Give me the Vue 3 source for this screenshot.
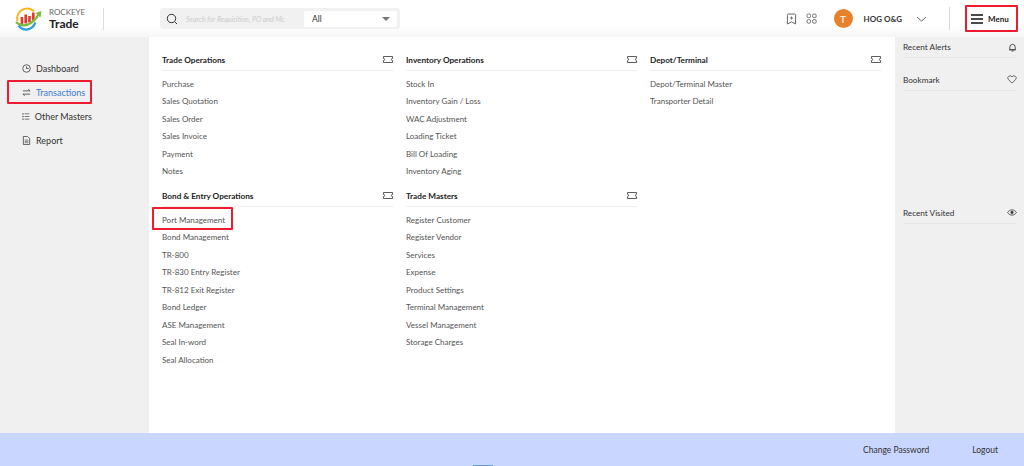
<template>
  <div class="page">
    <header class="topbar">
      <div class="brand">
        <svg class="logo" viewBox="0 0 28 24" width="28" height="24">
          <path d="M3.5 14 A10 10 0 0 1 20 4.2" fill="none" stroke="#f5b81f" stroke-width="2.2" />
          <rect x="6.6" y="10" width="2.6" height="7.5" fill="#e0392e" />
          <rect x="10.4" y="7.5" width="2.6" height="9" fill="#e0392e" />
          <rect x="14.2" y="9" width="2.6" height="6.5" fill="#e0392e" />
          <rect x="18" y="5.5" width="2.6" height="8" fill="#e0392e" />
          <path d="M2 15 C8 21 18 19 24.5 7.5" fill="none" stroke="#7cbb3c" stroke-width="2.4" />
          <path d="M21.5 6 L27.5 4 L26.5 10.5 Z" fill="#7cbb3c" />
          <path d="M4.5 18.5 C9 24.5 18 24 21.5 15.5" fill="none" stroke="#2f9fd8" stroke-width="2.2" />
        </svg>
        <div class="brand-text">
          <span class="brand-top">ROCKEYE</span>
          <span class="brand-name">Trade</span>
        </div>
      </div>
      <div class="search">
        <svg class="search-icon" viewBox="0 0 12 12" width="12" height="12">
          <circle cx="5.5" cy="5.5" r="4.2" fill="none" stroke="#333" stroke-width="1" />
          <path d="M8.5 8.5 L11 11" stroke="#333" stroke-width="1" />
        </svg>
        <span class="search-hint">Search for Requisition, PO and Mc</span>
        <div class="search-select">
          <span>All</span>
          <i class="caret"></i>
        </div>
      </div>
      <div class="top-actions">
        <svg viewBox="0 0 11 12" width="11" height="12">
          <path d="M2.6 1 H8.4 A1.2 1.2 0 0 1 9.6 2.2 V11 L5.5 8.8 L1.4 11 V2.2 A1.2 1.2 0 0 1 2.6 1 Z" fill="none" stroke="#555" stroke-width="0.9" stroke-linejoin="round" />
          <path d="M5.5 3.5 V6.5 M4 5 H7" stroke="#555" stroke-width="0.8" />
        </svg>
        <svg class="apps" viewBox="0 0 11 11" width="11" height="11">
          <g fill="none" stroke="#666" stroke-width="0.9">
            <rect x="1" y="1" width="3.6" height="3.6" rx="1.4" />
            <rect x="6.6" y="1" width="3.6" height="3.6" rx="1.4" />
            <rect x="1" y="6.6" width="3.6" height="3.6" rx="1.4" />
            <rect x="6.6" y="6.6" width="3.6" height="3.6" rx="1.4" />
          </g>
        </svg>
        <span class="avatar">T</span>
        <span class="user">HOG O&amp;G</span>
        <svg class="chevron" viewBox="0 0 11 6" width="11" height="6">
          <path d="M1 1 L5.5 5 L10 1" fill="none" stroke="#555" stroke-width="0.9" />
        </svg>
        <button class="menu-btn marked">
          <svg viewBox="0 0 12 10" width="12" height="10">
            <path d="M0 1 H12 M0 5 H12 M0 9 H12" stroke="#111" stroke-width="1.3" />
          </svg>
          Menu
        </button>
      </div>
    </header>

    <div class="body">
      <aside class="sidebar">
        <a v-for="item in navItems" :key="item.label" :class="['nav-item', { active: item.active, marked: item.active }]">
          <svg viewBox="0 0 10 10" width="9" height="9" v-html="item.icon"></svg>
          {{ item.label }}
        </a>
      </aside>

      <main class="content">
        <div v-for="(column, i) in columns" :key="i" class="column">
          <section v-for="group in column" :key="group.title" class="group">
            <div class="group-head">
              <span>{{ group.title }}</span>
              <svg viewBox="0 0 10 7" width="10" height="7">
                <path d="M0.5 0.5 H9.5 V2.4 A1.1 1.1 0 0 0 9.5 4.6 V6.5 H0.5 V4.6 A1.1 1.1 0 0 0 0.5 2.4 Z" fill="none" stroke="#333" stroke-width="0.8" />
              </svg>
            </div>
            <div class="group-items">
              <a v-for="link in group.links" :key="link" :class="['link', { marked: link === 'Port Management' }]">{{ link }}</a>
            </div>
          </section>
        </div>
      </main>

      <aside class="rightbar">
        <div class="side-block">
          <span>Recent Alerts</span>
          <svg viewBox="0 0 10 10" width="9" height="9">
            <path d="M2 7.5 V4.5 A3 3 0 0 1 8 4.5 V7.5 Z M1.2 7.6 H8.8 M4 9 H6" fill="none" stroke="#333" stroke-width="0.9" />
          </svg>
        </div>
        <div class="side-block bookmark">
          <span>Bookmark</span>
          <svg viewBox="0 0 11 10" width="10" height="9">
            <path d="M5.5 9 L1.2 4.8 A2.5 2.5 0 0 1 5.5 2.2 A2.5 2.5 0 0 1 9.8 4.8 Z" fill="none" stroke="#333" stroke-width="0.8" />
          </svg>
        </div>
        <div class="side-block visited">
          <span>Recent Visited</span>
          <svg viewBox="0 0 11 8" width="10" height="7">
            <path d="M0.5 4 C3 0 8 0 10.5 4 C8 8 3 8 0.5 4 Z" fill="none" stroke="#333" stroke-width="0.9" />
            <circle cx="5.5" cy="4" r="1.7" fill="#333" />
          </svg>
        </div>
      </aside>
    </div>

    <footer class="footer">
      <a>Change Password</a>
      <a>Logout</a>
      <i class="handle"></i>
    </footer>
  </div>
</template>

<script setup>
const navItems = [
  {
    label: 'Dashboard',
    icon: '<circle cx="5" cy="5" r="4.2" fill="none" stroke="#444" stroke-width="0.9"/><path d="M5 2.5 V5 H7.5" fill="none" stroke="#444" stroke-width="0.9"/>'
  },
  {
    label: 'Transactions',
    active: true,
    icon: '<path d="M1 3.2 H9 M7 1.5 L9 3.2 M9 6.8 H1 M3 8.5 L1 6.8" fill="none" stroke="#444" stroke-width="0.9"/>'
  },
  {
    label: 'Other Masters',
    icon: '<path d="M3.5 1.5 H9.5 M3.5 5 H9.5 M3.5 8.5 H9.5" stroke="#444" stroke-width="0.9"/><rect x="0.5" y="0.8" width="1.6" height="1.6" fill="#444"/><rect x="0.5" y="4.2" width="1.6" height="1.6" fill="#444"/><rect x="0.5" y="7.6" width="1.6" height="1.6" fill="#444"/>'
  },
  {
    label: 'Report',
    icon: '<path d="M1.5 0.5 H6.2 L8.5 2.8 V9.5 H1.5 Z" fill="none" stroke="#444" stroke-width="0.9"/><path d="M3 4.5 H7 M3 6 H7 M3 7.5 H7" stroke="#444" stroke-width="0.7"/>'
  }
]

const columns = [
  [
    {
      title: 'Trade Operations',
      links: ['Purchase', 'Sales Quotation', 'Sales Order', 'Sales Invoice', 'Payment', 'Notes']
    },
    {
      title: 'Bond & Entry Operations',
      links: ['Port Management', 'Bond Management', 'TR-800', 'TR-830 Entry Register', 'TR-812 Exit Register', 'Bond Ledger', 'ASE Management', 'Seal In-word', 'Seal Allocation']
    }
  ],
  [
    {
      title: 'Inventory Operations',
      links: ['Stock In', 'Inventory Gain / Loss', 'WAC Adjustment', 'Loading Ticket', 'Bill Of Loading', 'Inventory Aging']
    },
    {
      title: 'Trade Masters',
      links: ['Register Customer', 'Register Vendor', 'Services', 'Expense', 'Product Settings', 'Terminal Management', 'Vessel Management', 'Storage Charges']
    }
  ],
  [
    {
      title: 'Depot/Terminal',
      links: ['Depot/Terminal Master', 'Transporter Detail']
    }
  ]
]
</script>

<style>
html, body {
  margin: 0;
  height: 100%;
  overflow: hidden;
}
</style>

<style scoped>
.page {
  width: 1024px;
  height: 466px;
  display: flex;
  flex-direction: column;
  position: relative;
  overflow: hidden;
  font-family: Lato, "Liberation Sans", sans-serif;
  color: #333;
  background: #fff;
}

/* header */
.topbar {
  height: 37px;
  flex-shrink: 0;
  display: flex;
  align-items: center;
  box-sizing: border-box;
  padding: 0 6px 0 14px;
  background: linear-gradient(180deg, #fff 70%, #f6f6f6 100%);
}

.brand {
  width: 89px;
  height: 22px;
  margin-right: 56px;
  display: flex;
  align-items: center;
  gap: 7px;
  border-right: 1px solid #ddd;
}

.brand-text {
  display: flex;
  flex-direction: column;
}

.brand-top {
  font-size: 8px;
  line-height: 9px;
  color: #666;
}

.brand-name {
  font-size: 12px;
  line-height: 13px;
  font-weight: 700;
  color: #222;
}

.search {
  width: 240px;
  height: 21px;
  display: flex;
  align-items: center;
  box-sizing: border-box;
  padding: 0 3px 0 6px;
  background: #f1f1f1;
  border-radius: 3px;
}

.search-hint {
  width: 99px;
  margin-left: 8px;
  margin-right: 19px;
  font-size: 7px;
  font-style: italic;
  color: #ccc;
  white-space: nowrap;
  overflow: hidden;
}

.search-select {
  flex: 1;
  height: 16px;
  display: flex;
  align-items: center;
  justify-content: space-between;
  padding: 0 7px 0 8px;
  background: #fff;
  border-radius: 2px;
  font-size: 8.5px;
}

.caret {
  width: 0;
  height: 0;
  border-left: 4px solid transparent;
  border-right: 4px solid transparent;
  border-top: 4px solid #777;
}

.top-actions {
  margin-left: auto;
  display: flex;
  align-items: center;
}

.apps {
  margin-left: 9px;
}

.avatar {
  width: 19px;
  height: 19px;
  margin-left: 17px;
  border-radius: 50%;
  background: #e8822a;
  color: #fff;
  font-size: 10px;
  display: flex;
  align-items: center;
  justify-content: center;
}

.user {
  margin-left: 11px;
  font-size: 8px;
  font-weight: 700;
  color: #333;
}

.chevron {
  margin-left: 14px;
}

.menu-btn {
  height: 27px;
  width: 53px;
  margin-left: 38px;
  padding: 0 0 0 6px;
  display: flex;
  align-items: center;
  gap: 5px;
  box-sizing: border-box;
  background: none;
  border: none;
  font: inherit;
  font-size: 8px;
  font-weight: 700;
  color: #222;
}

.menu-btn::before {
  content: '';
  position: absolute;
  left: -16px;
  top: 2px;
  bottom: 2px;
  border-left: 1px solid #ddd;
}

/* red annotation frames */
.marked {
  position: relative;
}

.marked::after {
  content: '';
  position: absolute;
  inset: 0;
  box-sizing: border-box;
  border: 2px solid #ee1c2e;
  border-radius: 1px;
}

/* body */
.body {
  flex: 1;
  min-height: 0;
  display: flex;
}

.sidebar {
  width: 149px;
  flex-shrink: 0;
  box-sizing: border-box;
  padding: 19px 0 0 7px;
  background: #f0f0f0;
}

.nav-item {
  width: 85px;
  height: 24px;
  box-sizing: border-box;
  padding-left: 15px;
  display: flex;
  align-items: center;
  gap: 5px;
  font-size: 9px;
  color: #333;
  white-space: nowrap;
}

.nav-item.active {
  color: #3d7bd9;
}

.content {
  flex: 1;
  box-sizing: border-box;
  padding: 12px 14px 0 13px;
  display: grid;
  grid-template-columns: repeat(3, 231px);
  column-gap: 13px;
  align-items: start;
}

.group {
  margin-bottom: 4.6px;
}

.group-head {
  height: 22px;
  box-sizing: border-box;
  display: flex;
  align-items: center;
  justify-content: space-between;
  border-bottom: 1px solid #eee;
  font-size: 8.2px;
  font-weight: 700;
  color: #222;
}

.group-items {
  padding-top: 4.7px;
  display: flex;
  flex-direction: column;
  align-items: flex-start;
}

.link {
  height: 17.5px;
  line-height: 17.5px;
  font-size: 8px;
  color: #555;
  white-space: nowrap;
}

.link.marked::after {
  inset: -4.7px -8px -0.7px -10.5px;
}

.rightbar {
  width: 129px;
  flex-shrink: 0;
  box-sizing: border-box;
  padding: 0 7px 0 8px;
  background: #f0f0f0;
}

.side-block {
  height: 21px;
  box-sizing: border-box;
  display: flex;
  align-items: center;
  justify-content: space-between;
  border-bottom: 1px solid #e6e6e6;
  font-size: 8.2px;
  color: #333;
}

.bookmark {
  margin-top: 11px;
  height: 22px;
}

.visited {
  margin-top: 111px;
  height: 22px;
}

/* footer */
.footer {
  height: 33px;
  flex-shrink: 0;
  position: relative;
  display: flex;
  justify-content: flex-end;
  align-items: center;
  gap: 43px;
  padding-right: 26px;
  background: #c9d6ff;
  font-size: 8.5px;
  color: #333;
}

.handle {
  position: absolute;
  left: 473px;
  bottom: 0;
  width: 20px;
  height: 1px;
  background: #6a9bd8;
}
</style>
